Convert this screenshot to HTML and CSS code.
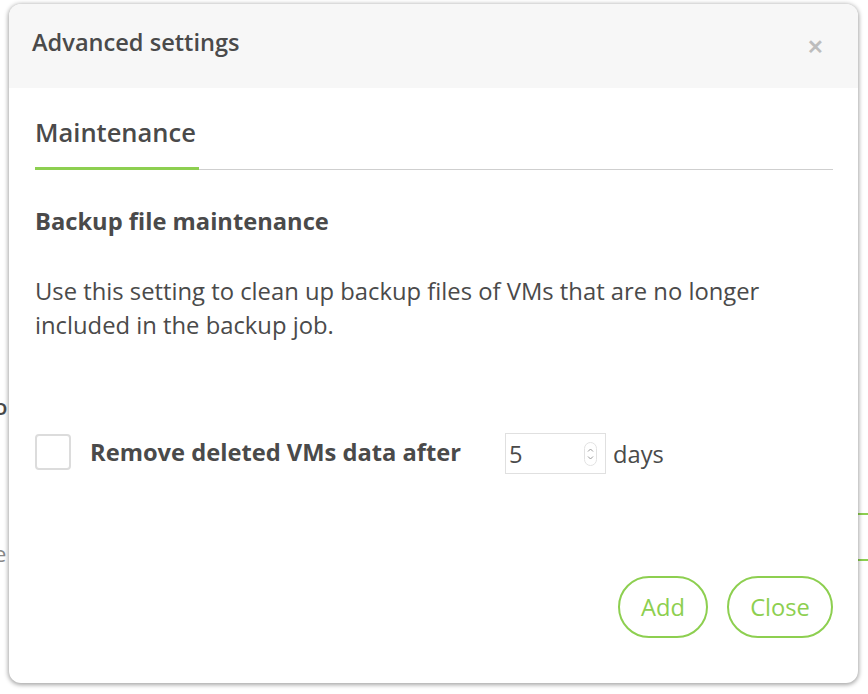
FILE: index.html
```html
<!DOCTYPE html>
<html>
<head>
<meta charset="utf-8">
<link rel="stylesheet" href="styles.css">
</head>
<body>
<div class="page">
  <span class="bg-frag frag-o">o</span>
  <span class="bg-frag frag-e">e</span>
  <div class="bg-line line-1"></div>
  <div class="bg-line line-2"></div>
  <div class="modal">
    <div class="modal-header">
      <h2 class="modal-title">Advanced settings</h2>
      <span class="modal-close">&#x2715;</span>
    </div>
    <div class="modal-body">
      <div class="tabs">
        <div class="tab active">Maintenance</div>
      </div>
      <h3 class="section-title">Backup file maintenance</h3>
      <p class="desc">Use this setting to clean up backup files of VMs that are no longer included in the backup job.</p>
      <div class="option-row">
        <span class="checkbox"></span>
        <span class="option-label">Remove deleted VMs data after</span>
        <div class="num-input">
          <span class="num-value">5</span>
          <span class="spinner">
            <svg width="13" height="24" viewBox="0 0 13 24"><rect x="0.5" y="0.5" width="12" height="23" rx="6" fill="none" stroke="#e2e2e2"/><path d="M4 9.5 L6.5 7 L9 9.5" fill="none" stroke="#999" stroke-width="1"/><path d="M4 14.5 L6.5 17 L9 14.5" fill="none" stroke="#999" stroke-width="1"/></svg>
          </span>
        </div>
        <span class="unit">days</span>
      </div>
    </div>
    <div class="modal-footer">
      <button class="btn btn-add">Add</button>
      <button class="btn btn-close">Close</button>
    </div>
  </div>
</div>
</body>
</html>
```
FILE: styles.css
```css
html, body {
  margin: 0;
  padding: 0;
  background: #ffffff;
}
body {
  font-family: "Open Sans", "Liberation Sans", sans-serif;
  color: #4a4a4a;
}
.page {
  position: relative;
  width: 868px;
  height: 694px;
  padding: 4px 10px 0 9px;
  box-sizing: border-box;
  overflow: hidden;
}
.bg-frag {
  position: absolute;
  font-size: 22px;
  font-weight: 600;
  color: #4a4a4a;
}
.frag-o { left: -6px; top: 391px; }
.frag-e { left: -6px; top: 538px; color: #888; font-weight: 400; }
.bg-line {
  position: absolute;
  left: 850px;
  width: 30px;
  height: 2px;
  background: #8dcf50;
}
.line-1 { top: 513px; }
.line-2 { top: 559px; }
.modal {
  position: relative;
  width: 849px;
  height: 679px;
  background: #fff;
  border-radius: 12px;
  box-shadow: 0 1px 4px 1px rgba(0,0,0,0.35);
  display: flex;
  flex-direction: column;
  overflow: hidden;
}
.modal-header {
  height: 84px;
  background: #f7f7f7;
  display: flex;
  align-items: center;
  justify-content: space-between;
  padding: 0 34px 0 23px;
  flex-shrink: 0;
}
.modal-title {
  margin: 0 0 8px;
  font-size: 23.6px;
  line-height: 32px;
  font-weight: 600;
  color: #4a4a4a;
}
.modal-close {
  font-size: 20px;
  color: #bdbdbd;
  font-weight: 700;
  margin-bottom: 0;
}
.modal-body {
  padding: 0 25px 0 26px;
  flex: 1;
}
.tabs {
  border-bottom: 1px solid #cfcfcf;
  margin-top: 26px;
  display: flex;
}
.tab {
  font-size: 25.5px;
  line-height: 36px;
  font-weight: 600;
  color: #4a4a4a;
  padding: 0 0 17px;
  width: 164px;
  border-bottom: 3px solid #8dcf50;
  margin-bottom: -1px;
}
.section-title {
  margin: 34px 0 0;
  font-size: 23.7px;
  font-weight: 700;
  line-height: 34px;
}
.desc {
  margin: 36px 0 0;
  font-size: 23.8px;
  line-height: 34px;
}
.option-row {
  display: flex;
  align-items: center;
  margin-top: 89px;
  height: 42px;
}
.checkbox {
  width: 32px;
  height: 32px;
  border: 2px solid #dcdcdc;
  border-radius: 4px;
  flex-shrink: 0;
}
.option-label {
  margin-left: 19px;
  font-size: 23.7px;
  font-weight: 700;
  width: 415px;
  flex-shrink: 0;
}
.num-input {
  width: 101px;
  height: 41px;
  border: 1px solid #e0e0e0;
  display: flex;
  align-items: center;
  justify-content: space-between;
  padding: 0 8px 0 3px;
  box-sizing: border-box;
  margin-top: 3px;
  flex-shrink: 0;
}
.num-value {
  font-size: 23.7px;
  color: #4a4a4a;
}
.spinner {
  display: flex;
}
.unit {
  margin-left: 7px;
  font-size: 23.7px;
  margin-top: 3px;
}
.modal-footer {
  display: flex;
  justify-content: flex-end;
  gap: 19px;
  padding: 0 25px 45px;
}
.btn {
  font-family: "Open Sans", "Liberation Sans", sans-serif;
  font-size: 23.7px;
  color: #8dcf50;
  background: #fff;
  border: 2px solid #8dcf50;
  border-radius: 31px;
  height: 62px;
  padding: 0;
}
.btn-add { width: 90px; }
.btn-close { width: 106px; }
```
